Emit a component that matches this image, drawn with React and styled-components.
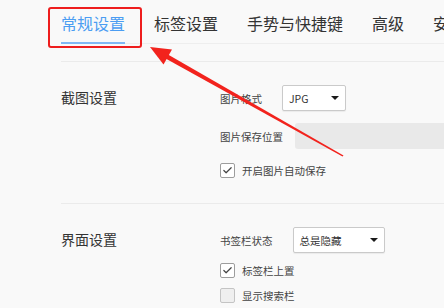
import React from 'react'
import styled, { createGlobalStyle } from 'styled-components'
import { Check } from 'lucide-react'

const Global = createGlobalStyle`
  html, body {
    margin: 0;
    padding: 0;
    background: #f9f9f9;
    overflow: hidden;
  }
  body {
    font-family: "Noto Sans CJK SC", "Noto Sans", sans-serif;
  }
`

const tabs = ['常规设置', '标签设置', '手势与快捷键', '高级', '安全设置']

function App() {
  return (
    <Page>
      <Global />
      <Tabs>
        {tabs.map((t, i) => (
          <Tab key={t} $active={i === 0}>{t}</Tab>
        ))}
      </Tabs>

      <Section>
        <Title>截图设置</Title>
        <Rows $gap={12}>
          <Row>
            <Label>图片格式</Label>
            <Select $width={64}>
              <span>JPG</span>
              <Caret />
            </Select>
          </Row>
          <Row $gap={12}>
            <Label>图片保存位置</Label>
            <PathInput />
          </Row>
          <CheckRow $top={2}>
            <Box $checked><Check size={11} strokeWidth={2.6} color="#444" /></Box>
            <CheckLabel>开启图片自动保存</CheckLabel>
          </CheckRow>
        </Rows>
      </Section>

      <Section>
        <Title>界面设置</Title>
        <Rows $gap={10}>
          <Row>
            <Label>书签栏状态</Label>
            <Select $width={92}>
              <span>总是隐藏</span>
              <Caret />
            </Select>
          </Row>
          <CheckRow>
            <Box $checked><Check size={11} strokeWidth={2.6} color="#444" /></Box>
            <CheckLabel>标签栏上置</CheckLabel>
          </CheckRow>
          <CheckRow>
            <Box />
            <CheckLabel>显示搜索栏</CheckLabel>
          </CheckRow>
        </Rows>
      </Section>

      <Highlight />
      <Arrow viewBox="0 0 444 308">
        <polygon points="166.2,53.6 343.5,155.6 342.5,156.4 163.8,57.4" fill="#f2231d" />
        <polygon points="150,47 172,49.5 163.5,64.5" fill="#f2231d" />
      </Arrow>
    </Page>
  )
}

const Page = styled.div`
  position: relative;
  width: 444px;
  height: 308px;
  padding-left: 61px;
  box-sizing: border-box;
  overflow: hidden;
`

const Tabs = styled.div`
  display: flex;
  align-items: flex-start;
  gap: 29px;
  height: 43px;
  border-bottom: 1px solid #eeeeee;
  margin-bottom: 17px;
  white-space: nowrap;
`

const Tab = styled.div`
  height: 44px;
  box-sizing: border-box;
  padding-top: 15px;
  margin-bottom: -1px;
  font-size: 16px;
  line-height: 16px;
  color: ${p => (p.$active ? '#4b9df2' : '#333')};
  border-bottom: 2px solid ${p => (p.$active ? '#80b8f4' : 'transparent')};
`

const Section = styled.div`
  display: grid;
  grid-template-columns: 159px 1fr;
  border-top: 1px solid #ebebeb;
  padding: 23px 0 25px;
`

const Title = styled.div`
  font-size: 14px;
  line-height: 24px;
  color: #333;
`

const Rows = styled.div`
  display: flex;
  flex-direction: column;
  gap: ${p => p.$gap}px;
`

const Row = styled.div`
  display: flex;
  align-items: center;
  gap: ${p => p.$gap ?? 20}px;
  height: 26px;
  white-space: nowrap;
`

const Label = styled.span`
  font-size: 10.5px;
  color: #444;
`

const Select = styled.div`
  width: ${p => p.$width}px;
  height: 26px;
  box-sizing: border-box;
  display: flex;
  align-items: center;
  justify-content: space-between;
  padding: 0 6px 0 6px;
  background: #fff;
  border: 1px solid #cacaca;
  border-radius: 2px;
  box-shadow: 0 1px 1px rgba(0, 0, 0, 0.06);
  font-size: 10.5px;
  color: #333;
`

const Caret = styled.i`
  width: 0;
  height: 0;
  border-left: 4px solid transparent;
  border-right: 4px solid transparent;
  border-top: 4px solid #1a1a1a;
`

const PathInput = styled.div`
  flex: none;
  width: 220px;
  height: 26px;
  background: #e9e9e9;
  border-radius: 3px;
`

const CheckRow = styled.label`
  display: flex;
  align-items: center;
  gap: 7px;
  height: 15px;
  margin-top: ${p => p.$top ?? 0}px;
`

const Box = styled.span`
  width: 15px;
  height: 15px;
  box-sizing: border-box;
  display: flex;
  align-items: center;
  justify-content: center;
  border: 1px solid ${p => (p.$checked ? '#9d9d9d' : '#c4c4c4')};
  border-radius: 2px;
  background: ${p => (p.$checked ? '#fff' : '#efefef')};
`

const CheckLabel = styled.span`
  font-size: 10.5px;
  color: #444;
`

const Highlight = styled.div`
  position: absolute;
  left: 48px;
  top: 7px;
  width: 94px;
  height: 41px;
  box-sizing: border-box;
  border: 2px solid #ee1d1d;
  border-radius: 3px;
  pointer-events: none;
`

const Arrow = styled.svg`
  position: absolute;
  left: 0;
  top: 0;
  width: 444px;
  height: 308px;
  pointer-events: none;
`

export default App
